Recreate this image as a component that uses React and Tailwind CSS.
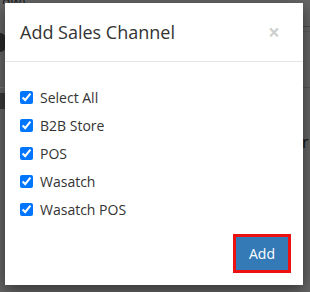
const channels = ["Select All", "B2B Store", "POS", "Wasatch", "Wasatch POS"];

// page behind the modal, dimmed by the backdrop
const Backdrop = () => (
  <div className="absolute inset-0 bg-[#666] flex justify-between">
    <div className="flex flex-col w-[12px]">
      <div className="h-[4px] overflow-hidden text-[14px] leading-[4px] text-[#222] pl-[2px] w-[40px]">ow)</div>
      <div className="mt-[29px] w-[6px] h-[19px] rounded-r-full bg-[#2a2a2a]" />
      <div className="mt-[35px] w-[12px] h-px bg-[#777]" />
      <div className="mt-[5px] w-[6px] h-[16px] bg-[#3a3a3a]" />
    </div>
    <div className="flex flex-col w-[8px]">
      <div className="mt-[26px] h-px bg-[#4a4a4a]" />
      <div className="mt-[4px] h-px bg-[#5c5c5c]" />
      <div className="mt-[55px] h-px bg-[#555]" />
      <div className="mt-[46px] text-[16px] leading-[16px] text-[#111]">r</div>
    </div>
  </div>
);

export default function App() {
  return (
    <div
      className="relative w-[310px] h-[292px] overflow-hidden"
      style={{ fontFamily: '"Open Sans", "Liberation Sans", sans-serif' }}
    >
      <Backdrop />
      <div className="absolute left-[5px] top-[3px] w-[298px] h-[282px] bg-white shadow-[0_5px_15px_rgba(0,0,0,0.5)] flex flex-col">
        <div className="h-[59px] border-b border-[#e5e5e5] flex items-center justify-between pl-[15px] pr-[23px]">
          <h4 className="text-[18px] text-[#333]">Add Sales Channel</h4>
          <span className="text-[21px] font-bold text-black/20 leading-none">×</span>
        </div>
        <div className="pt-[21px] pl-[15px] flex flex-col">
          {channels.map((c) => (
            <label key={c} className="h-[28px] flex items-center gap-[7px] text-[14px] text-[#333]">
              <input type="checkbox" checked readOnly className="w-[13px] h-[13px] m-0" />
              {c}
            </label>
          ))}
        </div>
        <div className="flex justify-end pr-[12px] mt-[11px]">
          <div className="border-[3px] border-[#ee1111]">
            <button className="w-[52px] h-[33px] bg-[#337ab7] text-white text-[14px]">Add</button>
          </div>
        </div>
      </div>
    </div>
  );
}
